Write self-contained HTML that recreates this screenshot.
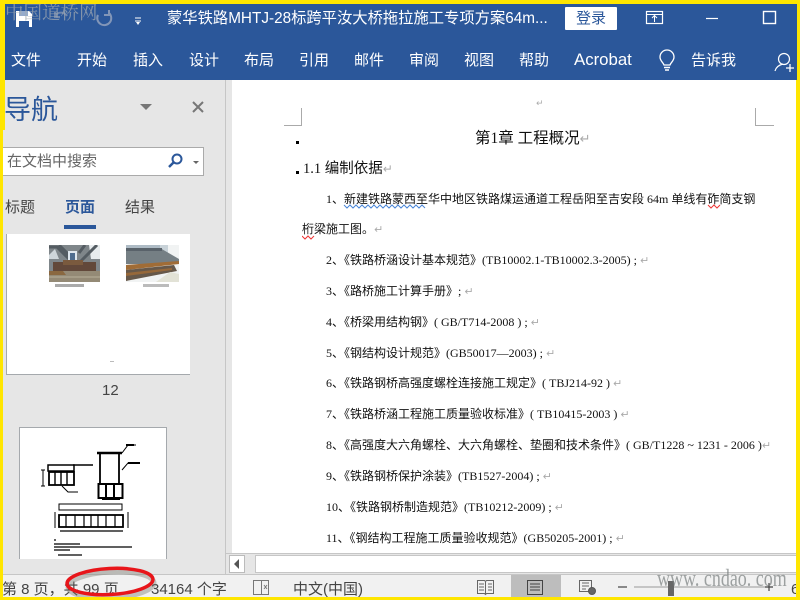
<!DOCTYPE html>
<html><head><meta charset="utf-8">
<style>
html,body{margin:0;padding:0}
body{width:800px;height:600px;position:relative;overflow:hidden;background:#e6e6e6;font-family:"Liberation Sans","Noto Sans CJK SC",sans-serif}
.a{position:absolute;white-space:nowrap}
.r{font-family:"Liberation Serif","WenQuanYi Zen Hei","Noto Sans CJK SC",serif;font-size:12px;color:#111;line-height:16px}
.m{color:#aaa;font-size:11px;font-family:"DejaVu Sans",sans-serif}
.t{color:#fff;font-size:15px;top:51px;line-height:18px}
.s{font-size:15px;color:#444;top:581px;line-height:18px}
</style></head>
<body>
<div class="a" style="left:0;top:0;width:800px;height:80px;background:#2b579a"></div>
<div class="a" style="left:5px;top:80px;width:795px;height:520px;background:#e6e6e6"></div>
<!-- title bar icons -->
<svg class="a" style="left:10px;top:8px" width="150" height="24" viewBox="0 0 150 24">
<path d="M6 3h13l3 3v13H6z" fill="#fff"/><rect x="9" y="13" width="10" height="6" fill="#2b579a"/><rect x="9" y="3" width="9" height="5" fill="#2b579a" opacity=".5"/>
<path d="M45 8a7 7 0 0 1 12 0M45 4v5h5" fill="none" stroke="#6f87ad" stroke-width="2"/>
<path d="M99 5a7 7 0 1 1-11 2M99 2v5h-5" fill="none" stroke="#8296b8" stroke-width="2"/>
<path d="M125 10h6M125 13h6" stroke="#fff" stroke-width="1"/><path d="M126 14l2 3 2-3z" fill="#fff"/>
</svg>
<!-- watermark top -->
<div class="a" style="left:5px;top:-2px;font-size:18.500px;color:rgba(165,172,178,.72);font-family:'Noto Serif CJK SC',serif;line-height:28px">中国道桥网</div>
<div class="a" style="left:167px;top:8px;color:#fff;font-size:15.300px;line-height:22px">蒙华铁路MHTJ-28标跨平汝大桥拖拉施工专项方案64m...</div>
<div class="a" style="left:565px;top:7px;width:52px;height:23px;background:#fff;border-radius:1px;color:#2b579a;font-size:15px;line-height:24px;text-align:center">登录</div>
<svg class="a" style="left:640px;top:6px" width="160" height="24" viewBox="0 0 160 24">
<rect x="6.500" y="5.500" width="16" height="12" fill="none" stroke="#fff" stroke-width="1.200"/><path d="M6.500 8.500h16" stroke="#fff"/><path d="M14.500 16v-6M12 12l2.500-2.500L17 12" fill="none" stroke="#fff"/>
<path d="M66 12.500h12" stroke="#fff" stroke-width="1.200"/>
<rect x="123.500" y="5.500" width="12" height="12" fill="none" stroke="#fff" stroke-width="1.400"/>
</svg>
<!-- ribbon -->
<div class="a t" style="left:11px;top:52px">文件</div>
<div class="a t" style="left:77px;top:52px">开始</div>
<div class="a t" style="left:133px;top:52px">插入</div>
<div class="a t" style="left:189px;top:52px">设计</div>
<div class="a t" style="left:244px;top:52px">布局</div>
<div class="a t" style="left:299px;top:52px">引用</div>
<div class="a t" style="left:354px;top:52px">邮件</div>
<div class="a t" style="left:409px;top:52px">审阅</div>
<div class="a t" style="left:464px;top:52px">视图</div>
<div class="a t" style="left:519px;top:52px">帮助</div>
<div class="a t" style="left:574px;top:51px;font-size:16.800px">Acrobat</div>
<div class="a t" style="left:691px;top:52px">告诉我</div>
<svg class="a" style="left:655px;top:48px" width="145" height="28" viewBox="0 0 145 28">
<path d="M9 17c-1-3-4-4-4-8a7 7 0 0 1 14 0c0 4-3 5-4 8z" fill="none" stroke="#fff" stroke-width="1.300"/><path d="M9 19.500h6M10 22h4" stroke="#fff" stroke-width="1.500"/>
<circle cx="129" cy="11" r="5.500" fill="none" stroke="#fff" stroke-width="1.200"/><path d="M120 23c1-4 4-6 8-7" fill="none" stroke="#fff" stroke-width="1.200"/><path d="M131 20h8M135 16v8" stroke="#fff" stroke-width="1.300"/>
</svg>
<!-- nav pane -->
<div class="a" style="left:225px;top:80px;width:1px;height:494px;background:#c6c6c6"></div>
<div class="a" style="left:232px;top:80px;width:568px;height:473px;background:#fff"></div>
<div class="a" style="left:4px;top:93px;font-size:27px;color:#2b579a;line-height:34px">导航</div>
<svg class="a" style="left:135px;top:96px" width="75" height="22" viewBox="0 0 75 22">
<path d="M5 8h12l-6 6z" fill="#777"/><path d="M58 6l10 10M68 6l-10 10" stroke="#777" stroke-width="2"/>
</svg>
<div class="a" style="left:3px;top:147px;width:200px;height:27px;background:#fff;border:1px solid #aaa;border-left:0"></div>
<div class="a" style="left:7px;top:153px;font-size:15px;color:#666;line-height:18px">在文档中搜索</div>
<svg class="a" style="left:165px;top:151px" width="40" height="20" viewBox="0 0 40 20">
<circle cx="12" cy="8" r="4.500" fill="none" stroke="#2b579a" stroke-width="2"/><path d="M9 11l-5 5" stroke="#2b579a" stroke-width="2.500"/><path d="M28 10h6l-3 3z" fill="#666"/>
</svg>
<div class="a" style="left:5px;top:199px;font-size:15px;color:#444;line-height:18px">标题</div>
<div class="a" style="left:65px;top:199px;font-size:15px;color:#2b579a;font-weight:bold;line-height:18px">页面</div>
<div class="a" style="left:125px;top:199px;font-size:15px;color:#444;line-height:18px">结果</div>
<div class="a" style="left:64px;top:225px;width:32px;height:4px;background:#2b579a"></div>
<!-- thumb 12 -->
<div class="a" style="left:6px;top:234px;width:183px;height:140px;background:#fff;border-left:1px solid #a5a9ad;border-bottom:1px solid #a5a9ad"></div>
<svg class="a" style="left:49px;top:245px" width="51" height="37" viewBox="0 0 51 37">
<rect width="51" height="37" fill="#7f868a"/><path d="M40 0h11v14H42z" fill="#e8ecee"/><path d="M0 10l6-6 4 10H0z" fill="#cfd6da"/>
<path d="M0 2h8l14 14M48 0L32 16M10 0l12 12M36 0l-6 8" stroke="#545c62" stroke-width="3" fill="none"/>
<rect x="19" y="6" width="9" height="12" fill="#dfe7ee"/><rect x="21" y="8" width="5" height="7" fill="#4f6d8f"/>
<rect x="4" y="17" width="43" height="9" fill="#62483a"/><rect x="14" y="15" width="20" height="5" fill="#7a5a3e"/>
<rect y="26" width="51" height="11" fill="#948a76"/><path d="M0 26h14l3 4H0z" fill="#8a6840"/><rect y="31" width="51" height="2" fill="#a69d88"/>
</svg>
<svg class="a" style="left:126px;top:245px" width="53" height="37" viewBox="0 0 53 37">
<rect width="53" height="37" fill="#f1f3f3"/><path d="M0 0h34v10H0z" fill="#aebbc5"/><path d="M34 0h8v12h-8z" fill="#c8d2d8"/>
<path d="M0 3h34l19 11v5H0z" fill="#757f84"/><path d="M0 3h36v3H0z" fill="#59626a"/>
<path d="M0 20l53-4v3L0 25z" fill="#a06c36"/><path d="M0 25l48-5 3 6L0 36z" fill="#66584a"/><path d="M0 28l46-5v2L0 31z" fill="#96683a"/>
<path d="M44 27l9 2v8H30z" fill="#e2e2d6"/>
</svg>
<div class="a" style="left:55px;top:284px;width:29px;height:3px;background:#aaa"></div>
<div class="a" style="left:143px;top:284px;width:26px;height:3px;background:#bbb"></div>
<div class="a" style="left:110px;top:361px;width:4px;height:1px;background:#bbb"></div>
<div class="a" style="left:102px;top:381px;font-size:15px;color:#444;line-height:20px">12</div>
<!-- thumb 13 -->
<div class="a" style="left:19px;top:427px;width:146px;height:131px;background:#fff;border:1px solid #a5a9ad;border-bottom:0"></div>
<svg class="a" style="left:20px;top:428px" width="146" height="130" viewBox="0 0 146 130" fill="none" stroke="#000">
<path d="M77 25h25" stroke-width="2.500"/><path d="M80 25v30M99 25v30" stroke-width="1.800"/><rect x="78.500" y="56" width="24" height="14" stroke-width="2"/><path d="M86 56v14M94 56v14M82 71h18" stroke-width="2"/>
<path d="M102 25l6-8h8M102 42l6-7h12" stroke-width="1"/><path d="M106 17h8M108 35h12" stroke-width="2"/>
<rect x="29" y="44" width="25" height="13" stroke-width="1.800"/><path d="M35 44v13M41 44v13M47 44v13" stroke-width="1.400"/><path d="M28 37h26v6H28z" stroke-width="1.500"/><path d="M53 37h20" stroke-width="1.500"/><path d="M23 42v16M21 42h4M21 58h4" stroke-width="1"/><path d="M42 58l6 6h10" stroke-width="1"/>
<path d="M39 76h63v6H39z" stroke-width="1"/><rect x="39" y="87" width="64" height="12" stroke-width="1.800"/><path d="M46 87v12M55 87v12M64 87v12M71 87v12M78 87v12M86 87v12M95 87v12" stroke-width="1.200"/><path d="M35 84v16M108 84v16" stroke-width="1"/><path d="M40 103h63" stroke-width="1.200"/>
<path d="M34 112h2M34 116h26M34 119h78M34 122h16M38 127h24" stroke-width="1.200"/>
</svg>
<!-- document -->
<svg class="a" style="left:232px;top:80px" width="568" height="60" viewBox="0 0 568 60" fill="none" stroke="#aaa">
<path d="M52 45.500h18M69.500 28v18"/><path d="M523.500 28v18M524 45.500h18"/>
</svg>
<div class="a m" style="left:536px;top:97px;line-height:14px;font-size:9px">↵</div>
<div class="a" style="left:296px;top:141px;width:3px;height:3px;background:#000"></div>
<div class="a" style="left:296px;top:171px;width:3px;height:3px;background:#000"></div>
<div class="a" style="left:475px;top:129px;font-size:15.500px;color:#111;line-height:20px;font-family:'Liberation Serif','Noto Sans CJK SC',serif">第1章 工程概况<span class="m" style="font-size:13px">↵</span></div>
<div class="a" style="left:303px;top:159px;font-size:14.500px;color:#111;line-height:20px;font-family:'Liberation Serif','Noto Sans CJK SC',serif">1.1 编制依据<span class="m" style="font-size:12px">↵</span></div>
<div class="a r" style="left:326px;top:191px">1、新建铁路蒙西至华中地区铁路煤运通道工程岳阳至吉安段 64m 单线有砟简支钢</div>
<svg class="a" style="left:302px;top:204px" width="460" height="36" viewBox="0 0 460 36" fill="none" stroke-width="1">
<path d="M42 1l3 3 3-3 3 3 3-3 3 3 3-3 3 3 3-3 3 3 3-3 3 3 3-3 3 3 3-3 3 3 3-3 3 3 3-3 3 3 3-3 3 3 3-3 3 3 3-3 3 3 3-3 3 3" stroke="#4a86d8"/>
<path d="M406 1l3 3 3-3 3 3 3-3" stroke="#e33"/>
<path d="M0 32l3 3 3-3 3 3 3-3" stroke="#e33"/>
</svg>
<div class="a r" style="left:302px;top:221px">桁梁施工图。<span class="m">↵</span></div>
<div class="a r" style="left:326px;top:252px">2、《铁路桥涵设计基本规范》(TB10002.1-TB10002.3-2005) ; <span class="m">↵</span></div>
<div class="a r" style="left:326px;top:283px">3、《路桥施工计算手册》; <span class="m">↵</span></div>
<div class="a r" style="left:326px;top:314px">4、《桥梁用结构钢》( GB/T714-2008 ) ; <span class="m">↵</span></div>
<div class="a r" style="left:326px;top:345px">5、《钢结构设计规范》(GB50017—2003) ; <span class="m">↵</span></div>
<div class="a r" style="left:326px;top:375px">6、《铁路钢桥高强度螺栓连接施工规定》( TBJ214-92 ) <span class="m">↵</span></div>
<div class="a r" style="left:326px;top:406px">7、《铁路桥涵工程施工质量验收标准》( TB10415-2003 ) <span class="m">↵</span></div>
<div class="a r" style="left:326px;top:437px">8、《高强度大六角螺栓、大六角螺栓、垫圈和技术条件》( GB/T1228 ~ 1231 - 2006 )<span class="m">↵</span></div>
<div class="a r" style="left:326px;top:468px">9、《铁路钢桥保护涂装》(TB1527-2004) ; <span class="m">↵</span></div>
<div class="a r" style="left:326px;top:499px">10、《铁路钢桥制造规范》(TB10212-2009) ; <span class="m">↵</span></div>
<div class="a r" style="left:326px;top:530px">11、《钢结构工程施工质量验收规范》(GB50205-2001) ; <span class="m">↵</span></div>
<!-- scrollbar -->
<div class="a" style="left:226px;top:553px;width:574px;height:22px;background:#e6e6e6;border-top:1px solid #c6c6c6;box-sizing:border-box"></div>
<div class="a" style="left:229px;top:555px;width:16px;height:18px;background:#fff;border:1px solid #bbb;box-sizing:border-box"></div>
<svg class="a" style="left:229px;top:555px" width="16" height="18"><path d="M5 9l5-5v10z" fill="#555"/></svg>
<div class="a" style="left:255px;top:555px;width:545px;height:18px;background:#fff;border:1px solid #c6c6c6;box-sizing:border-box"></div>
<!-- status bar -->
<div class="a" style="left:0;top:574px;width:800px;height:26px;background:#f1f1f1;border-top:1px solid #c6c6c6;box-sizing:border-box"></div>
<div class="a s" style="left:2px;top:581px">第 8 页，共 99 页</div>
<div class="a s" style="left:151px">34164 个字</div>
<div class="a s" style="left:293px">中文(中国)</div>
<div class="a" style="left:511px;top:575px;width:50px;height:22px;background:#bdbdbd"></div>
<svg class="a" style="left:250px;top:577px" width="550" height="20" viewBox="0 0 550 20" fill="none" stroke="#555">
<path d="M3.500 3.500h8v14h-8zM11.500 3.500h7v14h-7" stroke="#777"/><path d="M14 8l3 4M17 8l-3 4" stroke="#777"/>
<path d="M227.500 3.500h7l1 1 1-1h7v13h-7l-1 1-1-1h-7zM235.500 4v13M229 7h5M229 10h5M229 13h5M238 7h4M238 10h4M238 13h4" stroke="#666"/>
<rect x="277.500" y="3.500" width="15" height="14" stroke="#444"/><path d="M280 7h10M280 10h10M280 13h10" stroke="#444"/>
<path d="M329.500 3.500h12v11h-12zM332 6h7M332 9h7M332 12h4" stroke="#666"/><circle cx="342" cy="14" r="3.500" fill="#666"/>
<path d="M368 10h9" stroke="#444" stroke-width="1.200"/><path d="M384 10h131" stroke="#999"/><path d="M515 10h8M519 6v8" stroke="#444" stroke-width="1.200"/>
</svg>
<div class="a" style="left:668px;top:581px;width:6px;height:15px;background:#666"></div>
<div class="a s" style="left:791px;color:#444">6</div>
<div class="a" style="left:657px;top:565px;font-size:18px;color:rgba(120,125,125,.7);font-family:'Liberation Serif',serif;line-height:26px;transform:scaleY(1.350);transform-origin:left center">www. cndao. com</div>
<!-- red ellipse -->
<svg class="a" style="left:55px;top:560px" width="110" height="40" viewBox="0 0 110 40" fill="none">
<ellipse cx="56" cy="25" rx="43" ry="13" transform="rotate(-3 56 25)" stroke="rgba(120,120,110,.4)" stroke-width="5"/>
<ellipse cx="55" cy="21.500" rx="43" ry="13" transform="rotate(-3 55 21.500)" stroke="#e8151a" stroke-width="3.500"/>
</svg>
<!-- yellow frame -->
<div class="a" style="left:0;top:0;width:800px;height:4px;background:#ffe600"></div>
<div class="a" style="left:0;top:0;width:5px;height:130px;background:#ffe600"></div>
<div class="a" style="left:0;top:130px;width:3px;height:470px;background:#ffe600"></div>
<div class="a" style="left:797px;top:0;width:3px;height:80px;background:#ffe600"></div>
<div class="a" style="left:796px;top:80px;width:4px;height:520px;background:#ffe600"></div>
<div class="a" style="left:0;top:597px;width:800px;height:3px;background:#ffe600"></div>
</body></html>
